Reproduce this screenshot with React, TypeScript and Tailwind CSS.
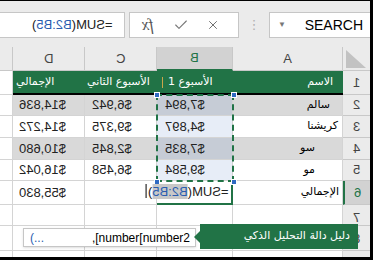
import { Check, X } from 'lucide-react';

// Mirrored (RTL-flipped) Excel sheet: formula bar, column headers, a small table
// with a SUM being typed in B6 and the function tooltip under it.

const rows = [
  { n: '2', name: 'سالم', namePad: 'pr-[12px]', b: '$7,894', c: '$6,942', d: '$14,836', band: true, h: 'h-[21px]' },
  { n: '3', name: 'كريشنا', namePad: 'pr-[4px]', b: '$4,897', c: '$9,375', d: '$14,272', band: false, h: 'h-[22px]' },
  { n: '4', name: 'سو', namePad: 'pr-[27px]', b: '$7,835', c: '$2,845', d: '$10,680', band: true, h: 'h-[22px]' },
  { n: '5', name: 'مو', namePad: 'pr-[27px]', b: '$9,584', c: '$6,458', d: '$16,042', band: false, h: 'h-[21px]' },
];

function Flip({ children, className = '' }: { children: React.ReactNode; className?: string }) {
  return <span className={`inline-block -scale-x-100 whitespace-nowrap ${className}`}>{children}</span>;
}

export default function App() {
  const line = 'border-r border-b border-[#d4d4d4]';
  const ar = "whitespace-nowrap font-['DejaVu_Sans',sans-serif] text-[11px]";
  return (
    <div className="relative h-[260px] w-[373px] overflow-hidden border-t border-r-[3px] border-b-[3px] border-black bg-[#ebebeb] font-['Liberation_Sans','DejaVu_Sans',sans-serif] text-[13px] text-[#222]">
      {/* formula bar */}
      <div className="flex h-[46px] items-start pt-[11px]">
        <div className="flex h-[26px] w-[125px] items-center justify-end border border-l-0 border-[#c6c6c6] bg-white pr-[11px]">
          <Flip>
            =SUM(<span className="text-[#2a5db0]">B2:B5</span>)
          </Flip>
        </div>
        <div className="ml-[4px] flex h-[26px] w-[110px] items-center border border-[#c6c6c6] bg-white pl-[12px]">
          <Flip className="font-['Liberation_Serif',serif] text-[16px] italic text-[#555]">fx</Flip>
          <Check className="ml-[19px] h-[16px] w-[16px] text-[#777]" strokeWidth={1.6} />
          <X className="ml-[17px] h-[14px] w-[14px] text-[#666]" strokeWidth={1.6} />
        </div>
        <div className="flex h-[26px] w-[30px] items-center justify-center text-[13px] text-[#b0b0b0]">⋮</div>
        <div className="flex h-[26px] flex-1 items-center border border-r-0 border-[#c6c6c6] bg-white pl-[8px]">
          <span className="text-[8px] text-[#777]">▼</span>
          <span className="ml-auto pr-[7px] text-[14px] text-black">SEARCH</span>
        </div>
      </div>

      {/* sheet */}
      <div className="grid grid-cols-[13px_72px_72px_76px_110px_27px] bg-white">
        {/* column headers */}
        <div className="h-[24px] border-r border-b border-[#c8c8c8] bg-[#ebebeb]" />
        <div className="flex h-[24px] items-center justify-center border-r border-b border-[#c8c8c8] bg-[#ebebeb] text-[#444]">
          <Flip>D</Flip>
        </div>
        <div className="flex h-[24px] items-center justify-center border-r border-b border-[#c8c8c8] bg-[#ebebeb] text-[#444]">
          <Flip>C</Flip>
        </div>
        <div className="flex h-[24px] items-center justify-center border-r border-b-2 border-[#c8c8c8] border-b-[#217346] bg-[#d2d2d2] text-[#217346]">
          <Flip>B</Flip>
        </div>
        <div className="flex h-[24px] items-center justify-center border-r border-b border-[#c8c8c8] bg-[#ebebeb] text-[#444]">A</div>
        <div className="flex h-[24px] items-end justify-start border-b border-[#c8c8c8] bg-[#ebebeb] pb-[2px] pl-[3px]">
          <svg width="20" height="18" viewBox="0 0 20 18">
            <polygon points="0,0 0,18 20,18" fill="#c2c2c2" />
          </svg>
        </div>

        {/* row 1: table header */}
        <div className={`h-[24px] ${line}`} />
        <div dir="rtl" className="flex h-[24px] items-center justify-end border-b-2 border-black bg-[#217346] pl-[3px] text-white">
          <span className={ar}>الإجمالي</span>
        </div>
        <div dir="rtl" className="flex h-[24px] items-center justify-end border-b-2 border-black bg-[#217346] pl-[2px] text-white">
          <span className={ar}>الأسبوع الثاني</span>
        </div>
        <div className="flex h-[24px] items-center border-b-2 border-black bg-[#217346] pl-[5px] text-white">
          <span className="h-[11px] w-px bg-[#c9a54a]" />
          <span dir="rtl" className={`ml-[5px] ${ar}`}>الأسبوع 1</span>
        </div>
        <div dir="rtl" className="flex h-[24px] items-center border-b-2 border-black bg-[#217346] pr-[10px] text-white">
          <span className={ar}>الاسم</span>
        </div>
        <div className="flex h-[24px] items-center justify-center border-b border-[#c8c8c8] bg-[#ebebeb] text-[#444]">
          <Flip>1</Flip>
        </div>

        {/* rows 2-5 */}
        {rows.map((r) => {
          const bg = r.band ? 'bg-[#d9d9d9]' : 'bg-white';
          const sel = r.band ? 'bg-[#c6ccd6]' : 'bg-[#e7edf7]';
          return [
            <div key={r.n + 'e'} className={`${r.h} ${line}`} />,
            <div key={r.n + 'd'} className={`flex ${r.h} items-center pl-[6px] ${line} ${bg}`}>
              <Flip>{r.d}</Flip>
            </div>,
            <div key={r.n + 'c'} className={`flex ${r.h} items-center pl-[7px] ${line} ${bg}`}>
              <Flip>{r.c}</Flip>
            </div>,
            <div key={r.n + 'b'} className={`flex ${r.h} items-center pl-[8px] ${line} ${sel}`}>
              <Flip>{r.b}</Flip>
            </div>,
            <div key={r.n + 'a'} dir="rtl" className={`flex ${r.h} items-center ${r.namePad} ${line} ${bg}`}>
              <span className={`${ar} text-black`}>{r.name}</span>
            </div>,
            <div key={r.n + 'n'} className={`flex ${r.h} items-center justify-center border-b border-[#c8c8c8] bg-[#ebebeb] text-[#444]`}>
              <Flip>{r.n}</Flip>
            </div>,
          ];
        })}

        {/* row 6: totals, B6 being edited */}
        <div className={`h-[24px] ${line}`} />
        <div className={`flex h-[24px] items-center pl-[6px] ${line}`}>
          <Flip>$55,830</Flip>
        </div>
        <div className={`h-[24px] ${line}`} />
        <div className="relative flex h-[24px] items-center justify-end border-r-2 border-b-2 border-[#217346] pr-[2px]">
          <Flip className="relative z-10">
            =SUM(<span className="bg-[#c8c8c8] text-[#2a5db0]">B2:B5</span>)
            <span className="ml-[1px] inline-block h-[14px] w-px translate-y-[2px] bg-black" />
          </Flip>
        </div>
        <div dir="rtl" className={`flex h-[24px] items-center pr-[3px] ${line}`}>
          <span className={`${ar} text-black`}>الإجمالي</span>
        </div>
        <div className="flex h-[24px] items-center justify-center border-b border-l-2 border-[#c8c8c8] border-l-[#217346] bg-[#d2d2d2] text-[#217346]">
          <Flip>6</Flip>
        </div>

        {/* rows 7-9 */}
        {[
          { n: '7', h: 'h-[21px]' },
          { n: '8', h: 'h-[25px]' },
          { n: '9', h: 'h-[22px]' },
        ].map((r) => [
          <div key={r.n + 'e'} className={`${r.h} ${line}`} />,
          <div key={r.n + 'd'} className={`${r.h} ${line}`} />,
          <div key={r.n + 'c'} className={`${r.h} ${line}`} />,
          <div key={r.n + 'b'} className={`${r.h} ${line}`} />,
          <div key={r.n + 'a'} className={`${r.h} ${line}`} />,
          <div key={r.n + 'n'} className={`flex ${r.h} items-start justify-center border-b border-[#c8c8c8] bg-[#ebebeb] pt-[3px] text-[#444]`}>
            <Flip>{r.n}</Flip>
          </div>,
        ])}
      </div>

      {/* copy-range marquee around B2:B5 */}
      <div className="pointer-events-none absolute top-[93px] left-[156px] h-[88px] w-[78px] border-2 border-dashed border-[#217346]" />
      {[
        'top-[91px] left-[154px]',
        'top-[91px] left-[231px]',
        'top-[178px] left-[231px]',
        'top-[178px] left-[154px]',
      ].map((p) => (
        <span key={p} className={`absolute ${p} h-[6px] w-[6px] border border-white bg-[#2f6ac2]`} />
      ))}

      {/* function argument tip */}
      <div className="absolute top-[227px] left-[23px] flex h-[19px] w-[173px] items-center border border-[#c6c6c6] bg-white pl-[6px] text-[12px] shadow-sm">
        <span className="text-[#2a5db0]">(...</span>
        <span className="ml-auto pr-[5px] text-black">,[number[number2</span>
      </div>
      <div className="absolute top-[223px] left-[200px] flex h-[25px] w-[158px] items-center justify-end bg-[#217346] pr-[8px] text-white">
        <span className="absolute top-[7px] -left-[6px] h-0 w-0 border-y-[6px] border-r-[6px] border-y-transparent border-r-[#217346]" />
        <span dir="rtl" className={ar}>دليل دالة التحليل الذكي</span>
      </div>
    </div>
  );
}
